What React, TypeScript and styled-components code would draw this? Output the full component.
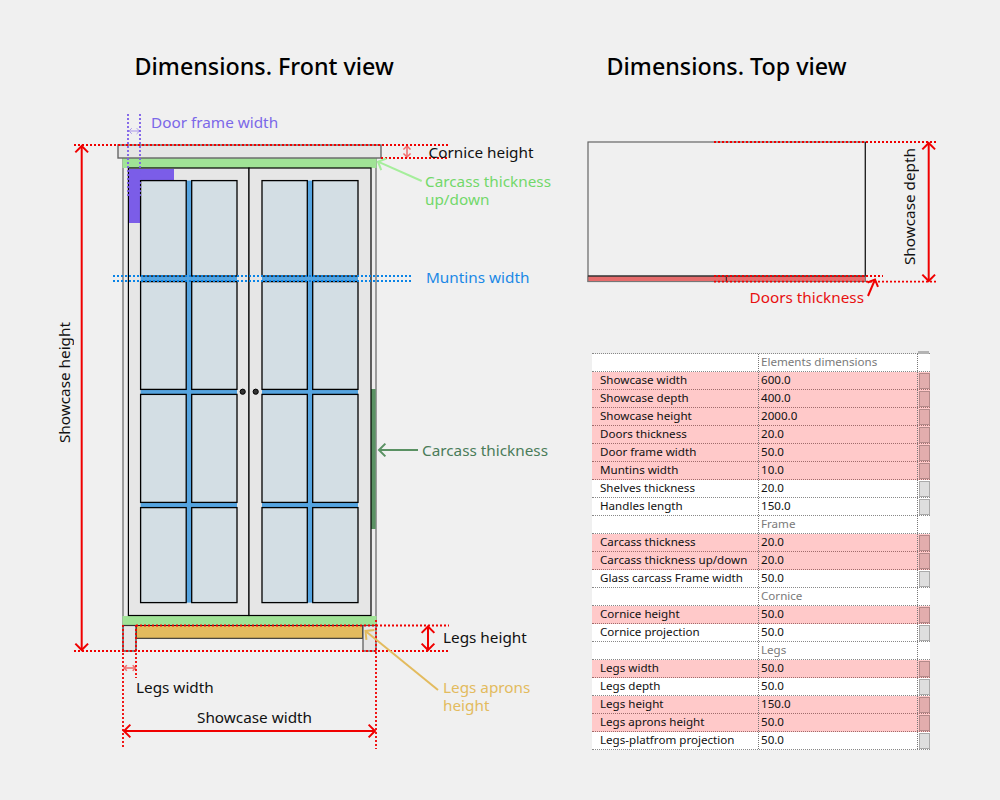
import React from 'react';
import styled, { createGlobalStyle } from 'styled-components';

const RED = '#f00000';
const PURPLE = '#7b5de8';
const BLUE = '#0a84e6';
const FONT = '"Noto Sans", "Open Sans", sans-serif';

const GlobalStyle = createGlobalStyle`
  html, body {
    margin: 0;
    padding: 0;
    background: #f0f0f0;
  }
  #root {
    width: 1000px;
    height: 800px;
    overflow: hidden;
  }
`;

const Page = styled.div`
  display: flex;
  width: 1000px;
  height: 800px;
  padding-top: 48px;
  box-sizing: border-box;
  background: #f0f0f0;
  font-family: ${FONT};
`;

const Column = styled.section<{ $width: number }>`
  display: flex;
  flex-direction: column;
  width: ${p => p.$width}px;
`;

const Title = styled.h1<{ $left: number }>`
  margin: 0 0 0 ${p => p.$left}px;
  height: 52px;
  font-size: 23.3px;
  line-height: 36px;
  font-weight: 500;
  color: #000;
  white-space: nowrap;
`;

const Canvas = styled.div<{ $height: number }>`
  position: relative;
  height: ${p => p.$height}px;
`;

const Drawing = styled.svg`
  display: block;
  width: 100%;
  height: 100%;
`;

const Label = styled.span<{ $x: number; $y: number; $color?: string }>`
  position: absolute;
  left: ${p => p.$x}px;
  top: ${p => p.$y}px;
  font-size: 15.3px;
  line-height: 18px;
  color: ${p => p.$color || '#111'};
  white-space: nowrap;
`;

const SideLabel = styled(Label)`
  writing-mode: vertical-rl;
  transform: rotate(180deg);
`;

const Table = styled.div`
  position: relative;
  display: flex;
  flex-direction: column;
  width: 338px;
  margin: 33px 0 0 22px;
  border-top: 1px dotted #888;
  font-family: "Noto Sans", sans-serif;
  font-size: 11.6px;
  color: #111;
`;

const TableCap = styled.span`
  position: absolute;
  top: -3px;
  right: 1px;
  width: 11px;
  height: 3px;
  background: #b4b4b4;
`;

const Row = styled.div<{ $marked?: boolean }>`
  display: grid;
  grid-template-columns: 167px 158px 13px;
  height: 18px;
  box-sizing: border-box;
  border-bottom: 1px dotted ${p => (p.$marked ? '#a06c6c' : '#888')};
  background: ${p => (p.$marked ? '#ffc9c9' : '#fff')};
`;

const NameCell = styled.div`
  padding-left: 8px;
  line-height: 15px;
  white-space: nowrap;
  border-right: 1px dotted #777;
`;

const ValueCell = styled.div<{ $section?: boolean }>`
  padding-left: 2px;
  line-height: 15px;
  color: ${p => (p.$section ? '#7a7a7a' : '#111')};
`;

const CheckCell = styled.div`
  display: flex;
  align-items: center;
  justify-content: center;
  border-left: 1px dotted #777;
`;

const CheckBox = styled.span<{ $marked?: boolean }>`
  display: block;
  width: 9px;
  height: 14px;
  background: ${p => (p.$marked ? '#e2adad' : '#dedede')};
  border: 1px solid ${p => (p.$marked ? '#b48a8a' : '#aaa')};
`;

interface ArrowProps {
  x1: number;
  y1: number;
  x2: number;
  y2: number;
  color: string;
  width?: number;
  head?: number;
  both?: boolean;
  opacity?: number;
}

const headPoints = (x: number, y: number, fromX: number, fromY: number, size: number) => {
  const angle = Math.atan2(fromY - y, fromX - x);
  const a = angle + Math.PI / 4;
  const b = angle - Math.PI / 4;
  return `${x + Math.cos(a) * size},${y + Math.sin(a) * size} ${x},${y} ${x + Math.cos(b) * size},${y + Math.sin(b) * size}`;
};

const Arrow = ({ x1, y1, x2, y2, color, width = 2, head = 9, both, opacity }: ArrowProps) => (
  <g stroke={color} strokeWidth={width} fill="none" opacity={opacity}>
    <line x1={x1} y1={y1} x2={x2} y2={y2} />
    <polyline points={headPoints(x2, y2, x1, y1, head)} />
    {both && <polyline points={headPoints(x1, y1, x2, y2, head)} />}
  </g>
);

const Dots = ({ x1, y1, x2, y2, color = RED }: { x1: number; y1: number; x2: number; y2: number; color?: string }) => (
  <line x1={x1} y1={y1} x2={x2} y2={y2} stroke={color} strokeWidth={1.8} strokeDasharray="2 2" />
);

const paneRows: [number, number][] = [
  [180.6, 276],
  [281.6, 389.4],
  [394.4, 502.4],
  [507.6, 602.6],
];

const Glass = ({ left, right, barLeft, barRight }: { left: number; right: number; barLeft: number; barRight: number }) => (
  <g>
    <rect x={left} y={180.6} width={right - left} height={422} fill="#55a4e0" />
    {paneRows.map(([top, bottom]) => (
      <g key={top} fill="#d3dee4" stroke="#000" strokeWidth={1.3}>
        <rect x={left} y={top} width={barLeft - left} height={bottom - top} />
        <rect x={barRight} y={top} width={right - barRight} height={bottom - top} />
      </g>
    ))}
  </g>
);

const FrontDrawing = () => (
  <Drawing viewBox="0 100 570 660">
    {/* carcass */}
    <rect x={123} y={158} width={253} height={468} fill="#ececec" stroke="#808080" strokeWidth={1.5} />
    <rect x={122.5} y={158} width={254} height={10} fill="#a0e396" />
    <rect x={122.5} y={616} width={254} height={9.5} fill="#a0e396" />
    <rect x={370.7} y={389} width={5} height={140} fill="#5a9163" />
    {/* cornice */}
    <rect x={118} y={145} width={263} height={13} fill="#e6e6e6" stroke="#666" strokeWidth={1.4} />
    {/* doors */}
    <rect x={128.4} y={168} width={120.6} height={447.5} fill="#e6e6e6" stroke="#000" strokeWidth={1.2} />
    <rect x={249} y={168} width={122} height={447.5} fill="#e6e6e6" stroke="#000" strokeWidth={1.2} />
    <path d="M129 169H174V180.5H140V223H129Z" fill={PURPLE} />
    <Glass left={140.6} right={237} barLeft={186.2} barRight={191.7} />
    <Glass left={262} right={358} barLeft={307.3} barRight={312.7} />
    <circle cx={242.7} cy={391.7} r={2.6} fill="#333" stroke="#000" />
    <circle cx={255.7} cy={391.7} r={2.6} fill="#333" stroke="#000" />
    {/* legs */}
    <rect x={136} y={625.5} width={226.7} height={12.8} fill="#e3bb5e" stroke="#222" strokeWidth={1} />
    <rect x={123} y={625.5} width={13} height={25.5} fill="#e6e6e6" stroke="#333" strokeWidth={1.2} />
    <rect x={363} y={625.5} width={13} height={25.5} fill="#e6e6e6" stroke="#555" strokeWidth={1.2} />
    {/* dimension lines */}
    <Dots x1={74} y1={145} x2={449} y2={145} />
    <Dots x1={381} y1={158} x2={449} y2={158} />
    <Dots x1={74} y1={651} x2={449} y2={651} />
    <Dots x1={136} y1={625.5} x2={449} y2={625.5} />
    <Dots x1={123} y1={625} x2={123} y2={747} />
    <Dots x1={376} y1={620} x2={376} y2={749} />
    <Dots x1={136} y1={625} x2={136} y2={678} />
    <Dots x1={128} y1={114} x2={128} y2={198} color={PURPLE} />
    <Dots x1={140} y1={114} x2={140} y2={198} color={PURPLE} />
    <Dots x1={113} y1={276} x2={413} y2={276} color={BLUE} />
    <Dots x1={113} y1={281} x2={413} y2={281} color={BLUE} />
    <Arrow x1={81.7} y1={146} x2={81.7} y2={650} color={RED} both />
    <Arrow x1={124} y1={731} x2={375} y2={731} color={RED} both />
    <Arrow x1={428} y1={626.5} x2={428} y2={650} color={RED} both />
    <Arrow x1={407} y1={146} x2={407} y2={157} color={RED} width={1.5} head={5} both opacity={0.55} />
    <Arrow x1={124} y1={668} x2={135.5} y2={668} color={RED} width={1.5} head={4} both opacity={0.55} />
    <Arrow x1={129} y1={131} x2={139.5} y2={131} color={PURPLE} width={1} head={4} both opacity={0.6} />
    <Arrow x1={421.7} y1={181} x2={378} y2={161.7} color="#a5ee9b" />
    <Arrow x1={438} y1={690} x2={365.5} y2={631} color="#e3bb5e" />
    <Arrow x1={418} y1={450} x2={379} y2={450} color="#5a9163" />
  </Drawing>
);

const TopDrawing = () => (
  <Drawing viewBox="570 100 430 220">
    <rect x={588} y={142} width={277.3} height={139.5} fill="#f0f0f0" stroke="#666" strokeWidth={1.2} />
    <line x1={865.3} y1={142} x2={865.3} y2={276} stroke="#111" strokeWidth={1} />
    <rect x={588} y={276} width={277.3} height={5.5} fill="#e66c6c" stroke="#777" strokeWidth={1} />
    <line x1={588} y1={276} x2={865.3} y2={276} stroke="#111" strokeWidth={1} />
    <line x1={726.3} y1={276} x2={726.3} y2={281.5} stroke="#222" strokeWidth={1} />
    <Dots x1={714} y1={142} x2={936} y2={142} />
    <Dots x1={714} y1={276} x2={883} y2={276} />
    <Dots x1={714} y1={281.7} x2={936} y2={281.7} />
    <Arrow x1={928.7} y1={143} x2={928.7} y2={281} color={RED} both />
    <Arrow x1={868} y1={296} x2={875} y2={279.5} color={RED} head={8} />
  </Drawing>
);

interface TableRow {
  name?: string;
  value: string;
  marked?: boolean;
}

const rows: TableRow[] = [
  { value: 'Elements dimensions' },
  { name: 'Showcase width', value: '600.0', marked: true },
  { name: 'Showcase depth', value: '400.0', marked: true },
  { name: 'Showcase height', value: '2000.0', marked: true },
  { name: 'Doors thickness', value: '20.0', marked: true },
  { name: 'Door frame width', value: '50.0', marked: true },
  { name: 'Muntins width', value: '10.0', marked: true },
  { name: 'Shelves thickness', value: '20.0' },
  { name: 'Handles length', value: '150.0' },
  { value: 'Frame' },
  { name: 'Carcass thickness', value: '20.0', marked: true },
  { name: 'Carcass thickness up/down', value: '20.0', marked: true },
  { name: 'Glass carcass Frame width', value: '50.0' },
  { value: 'Cornice' },
  { name: 'Cornice height', value: '50.0', marked: true },
  { name: 'Cornice projection', value: '50.0' },
  { value: 'Legs' },
  { name: 'Legs width', value: '50.0', marked: true },
  { name: 'Legs depth', value: '50.0' },
  { name: 'Legs height', value: '150.0', marked: true },
  { name: 'Legs aprons height', value: '50.0', marked: true },
  { name: 'Legs-platfrom projection', value: '50.0' },
];

export default function App() {
  return (
    <Page>
      <GlobalStyle />
      <Column $width={570}>
        <Title $left={134.5}>Dimensions. Front view</Title>
        <Canvas $height={660}>
          <FrontDrawing />
          <Label $x={151} $y={13} $color="#7b68e8">Door frame width</Label>
          <Label $x={428.5} $y={43}>Cornice height</Label>
          <Label $x={425} $y={72} $color="#72d86a">Carcass thickness<br />up/down</Label>
          <Label $x={426} $y={168} $color="#1a88e6">Muntins width</Label>
          <Label $x={422} $y={341} $color="#4a7c59">Carcass thickness</Label>
          <Label $x={443} $y={528}>Legs height</Label>
          <Label $x={443} $y={578} $color="#e3bb5e">Legs aprons<br />height</Label>
          <Label $x={136} $y={578}>Legs width</Label>
          <Label $x={197} $y={608}>Showcase width</Label>
          <SideLabel $x={55} $y={222}>Showcase height</SideLabel>
        </Canvas>
      </Column>
      <Column $width={430}>
        <Title $left={36.5}>Dimensions. Top view</Title>
        <Canvas $height={220}>
          <TopDrawing />
          <Label $x={179.5} $y={188} $color="#e81010">Doors thickness</Label>
          <SideLabel $x={330} $y={48}>Showcase depth</SideLabel>
        </Canvas>
        <Table>
          <TableCap />
          {rows.map(row => (
            <Row key={row.value + row.name} $marked={row.marked}>
              <NameCell>{row.name}</NameCell>
              <ValueCell $section={!row.name}>{row.value}</ValueCell>
              <CheckCell>{row.name && <CheckBox $marked={row.marked} />}</CheckCell>
            </Row>
          ))}
        </Table>
      </Column>
    </Page>
  );
}
